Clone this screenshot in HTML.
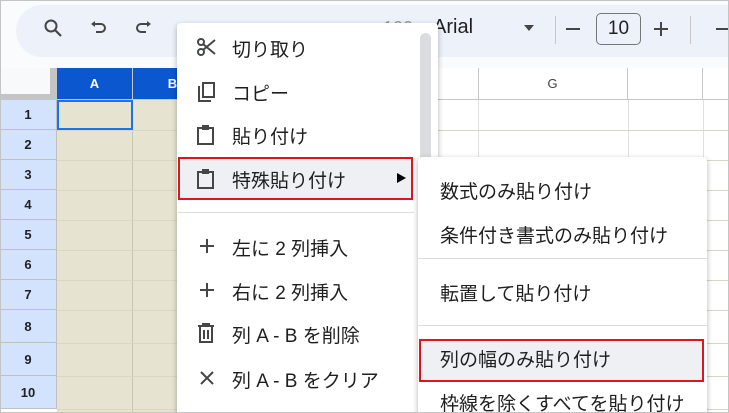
<!DOCTYPE html><html><head><meta charset="utf-8"><style>
*{margin:0;padding:0;box-sizing:border-box}
html,body{width:729px;height:413px;overflow:hidden}
body{position:relative;background:#fff;font-family:"Liberation Sans","Noto Sans CJK JP",sans-serif;color:#202124}
.a{position:absolute}
.frame{left:0;top:0;width:729px;height:413px;border:1px solid #c4c4c4;z-index:50;pointer-events:none}
.tb{left:0;top:0;width:729px;height:68px;background:#f9fbfd}
.pill{left:16px;top:5px;width:740px;height:52px;background:#edf2fa;border-radius:26px}
.ch{top:68px;height:32px;border-right:1px solid #c7c7c7;border-bottom:1px solid #c7c7c7;font-size:13px;text-align:center;line-height:32px}
.rh{left:0;width:57px;background:#d3e3fd;border-bottom:1px solid #c0c0c0;border-right:1px solid #c0c0c0;text-align:center;font-size:13px;font-weight:bold}
.menu{background:#fff;box-shadow:0 2px 6px rgba(0,0,0,.3);border-radius:4px}
.it{position:absolute;font-size:19px;line-height:22px;color:#1f1f1f;white-space:nowrap;margin-top:4px}
.sep{position:absolute;height:1px;background:#dadce0}
.hl{position:absolute;height:1px;left:57px;width:672px;background:#d8d6c4}
</style></head><body>
<div class="a tb"></div><div class="a pill"></div>
<svg class="a" style="left:42px;top:17px" width="22" height="22" viewBox="0 0 22 22"><circle cx="9" cy="9" r="5.5" fill="none" stroke="#444746" stroke-width="2"/><path d="M13 13l6 6" stroke="#444746" stroke-width="2.2"/></svg>
<svg class="a" style="left:89px;top:20px" width="20" height="18" viewBox="0 0 20 18"><path d="M5 4H12a4 4 0 0 1 0 8H7" fill="none" stroke="#444746" stroke-width="2"/><path d="M2 4l4-3v6z" fill="#444746"/></svg>
<svg class="a" style="left:133px;top:20px" width="20" height="18" viewBox="0 0 20 18"><path d="M15 4H8a4 4 0 0 0 0 8H13" fill="none" stroke="#444746" stroke-width="2"/><path d="M18 4l-4-3v6z" fill="#444746"/></svg>
<div class="a" style="left:383px;top:18px;font-size:18px;color:#999">100</div>
<div class="a" style="left:433px;top:16px;font-size:20px;color:#1f1f1f">Arial</div>
<div class="a" style="left:524px;top:25px;width:0;height:0;border-left:5px solid transparent;border-right:5px solid transparent;border-top:6px solid #444746"></div>
<div class="a" style="left:555px;top:16px;width:1px;height:28px;background:#c7c7c7"></div>
<div class="a" style="left:566px;top:28px;width:14px;height:2px;background:#444746"></div>
<div class="a" style="left:596px;top:13px;width:45px;height:32px;border:1px solid #747775;border-radius:5px;font-size:19px;text-align:center;line-height:30px">10</div>
<div class="a" style="left:654px;top:28px;width:14px;height:2px;background:#444746"></div>
<div class="a" style="left:660px;top:22px;width:2px;height:14px;background:#444746"></div>
<div class="a" style="left:690px;top:16px;width:1px;height:28px;background:#c7c7c7"></div>
<div class="a" style="left:716px;top:28px;width:14px;height:2px;background:#444746"></div>
<!-- grid -->
<div class="a" style="left:0;top:68px;width:57px;height:32px;background:#f8f9fa;border-right:7px solid #c4c4c4;border-bottom:6px solid #c4c4c4"></div>
<div class="a ch" style="left:57px;width:76px;background:#0b57d0;color:#fff;font-weight:bold">A</div>
<div class="a ch" style="left:133px;width:80px;background:#0b57d0;color:#fff;font-weight:bold">B</div>
<div class="a ch" style="left:213px;width:266px;background:#fff"></div>
<div class="a ch" style="left:478px;width:150px;color:#444">G</div>
<div class="a ch" style="left:628px;width:75px"></div>
<div class="a ch" style="left:703px;width:30px"></div>
<div class="a" style="left:57px;top:100px;width:156px;height:313px;background:#e6e3d1"></div>
<div class="a" style="left:132px;top:100px;width:1px;height:313px;background:#c9c6b0"></div>
<div class="a" style="left:478px;top:100px;width:1px;height:313px;background:#e0e0e0"></div>
<div class="a" style="left:628px;top:100px;width:1px;height:313px;background:#e0e0e0"></div>
<div class="a" style="left:703px;top:100px;width:1px;height:313px;background:#e0e0e0"></div>
<div class="hl" style="top:130px"></div><div class="hl" style="top:160px"></div><div class="hl" style="top:190px"></div><div class="hl" style="top:220px"></div><div class="hl" style="top:250px"></div><div class="hl" style="top:280px"></div><div class="hl" style="top:310px"></div><div class="hl" style="top:343px"></div><div class="hl" style="top:376px"></div><div class="hl" style="top:409px"></div>
<div class="a" style="left:57px;top:100px;width:76px;height:30px;border:2px solid #1a73e8"></div>
<div class="a rh" style="top:100px;height:30px;line-height:30px">1</div>
<div class="a rh" style="top:130px;height:30px;line-height:30px">2</div>
<div class="a rh" style="top:160px;height:30px;line-height:30px">3</div>
<div class="a rh" style="top:190px;height:30px;line-height:30px">4</div>
<div class="a rh" style="top:220px;height:30px;line-height:30px">5</div>
<div class="a rh" style="top:250px;height:30px;line-height:30px">6</div>
<div class="a rh" style="top:280px;height:30px;line-height:30px">7</div>
<div class="a rh" style="top:310px;height:33px;line-height:33px">8</div>
<div class="a rh" style="top:343px;height:33px;line-height:33px">9</div>
<div class="a rh" style="top:376px;height:33px;line-height:33px">10</div>
<!-- main menu -->
<div class="a menu" style="left:177px;top:23px;width:261px;height:395px"></div>
<div class="a" style="left:420px;top:33px;width:11px;height:130px;background:#dadce0;border-radius:6px"></div>
<div class="a" style="left:178px;top:157px;width:235px;height:43px;background:#eef0f3;border:2px solid #e0141e"></div>
<svg class="a" style="left:196px;top:37px" width="22" height="20" viewBox="0 0 22 20"><circle cx="5" cy="5" r="3" fill="none" stroke="#444746" stroke-width="2"/><circle cx="5" cy="15" r="3" fill="none" stroke="#444746" stroke-width="2"/><path d="M7 7L19 17M7 13L19 3" stroke="#444746" stroke-width="2"/></svg>
<svg class="a" style="left:196px;top:81px" width="20" height="22" viewBox="0 0 20 22"><path d="M3 5v15h12" fill="none" stroke="#444746" stroke-width="2"/><rect x="7" y="2" width="11" height="14" fill="none" stroke="#444746" stroke-width="2"/></svg>
<svg class="a" style="left:196px;top:124px" width="20" height="22" viewBox="0 0 20 22"><rect x="2" y="4" width="15" height="16" fill="none" stroke="#444746" stroke-width="2"/><rect x="6" y="1" width="7" height="5" fill="#444746"/></svg>
<svg class="a" style="left:196px;top:168px" width="20" height="22" viewBox="0 0 20 22"><rect x="2" y="4" width="15" height="16" fill="none" stroke="#444746" stroke-width="2"/><rect x="6" y="1" width="7" height="5" fill="#444746"/></svg>
<div class="it" style="left:232px;top:36px">切り取り</div>
<div class="it" style="left:232px;top:80px">コピー</div>
<div class="it" style="left:232px;top:123px">貼り付け</div>
<div class="it" style="left:232px;top:167px">特殊貼り付け</div>
<div class="a" style="left:397px;top:173px;width:0;height:0;border-top:5px solid transparent;border-bottom:5px solid transparent;border-left:9px solid #000"></div>
<div class="sep" style="left:178px;top:212px;width:236px"></div>
<svg class="a" style="left:199px;top:238px" width="16" height="16" viewBox="0 0 16 16"><path d="M8 1v14M1 8h14" stroke="#444746" stroke-width="2"/></svg>
<svg class="a" style="left:199px;top:282px" width="16" height="16" viewBox="0 0 16 16"><path d="M8 1v14M1 8h14" stroke="#444746" stroke-width="2"/></svg>
<svg class="a" style="left:197px;top:322px" width="18" height="22" viewBox="0 0 18 22"><path d="M1 4h16M6 4V2h6v2M3 5v15h12V5M7 8v9M11 8v9" fill="none" stroke="#444746" stroke-width="2"/></svg>
<svg class="a" style="left:199px;top:370px" width="16" height="16" viewBox="0 0 16 16"><path d="M2 2l12 12M14 2L2 14" stroke="#444746" stroke-width="2"/></svg>
<div class="it" style="left:232px;top:235px">左に 2 列挿入</div>
<div class="it" style="left:232px;top:279px">右に 2 列挿入</div>
<div class="it" style="left:232px;top:322px">列 A - B を削除</div>
<div class="it" style="left:232px;top:367px">列 A - B をクリア</div>
<!-- submenu -->
<div class="a menu" style="left:418px;top:157px;width:289px;height:262px"></div>
<div class="it" style="left:440px;top:178px">数式のみ貼り付け</div>
<div class="it" style="left:440px;top:222px">条件付き書式のみ貼り付け</div>
<div class="sep" style="left:418px;top:258px;width:289px"></div>
<div class="it" style="left:440px;top:280px">転置して貼り付け</div>
<div class="sep" style="left:418px;top:325px;width:289px"></div>
<div class="a" style="left:419px;top:339px;width:285px;height:43px;background:#eef0f3;border:2px solid #e0141e"></div>
<div class="it" style="left:440px;top:346px">列の幅のみ貼り付け</div>
<div class="it" style="left:440px;top:390px">枠線を除くすべてを貼り付け</div>
<div class="a frame"></div>
</body></html>
